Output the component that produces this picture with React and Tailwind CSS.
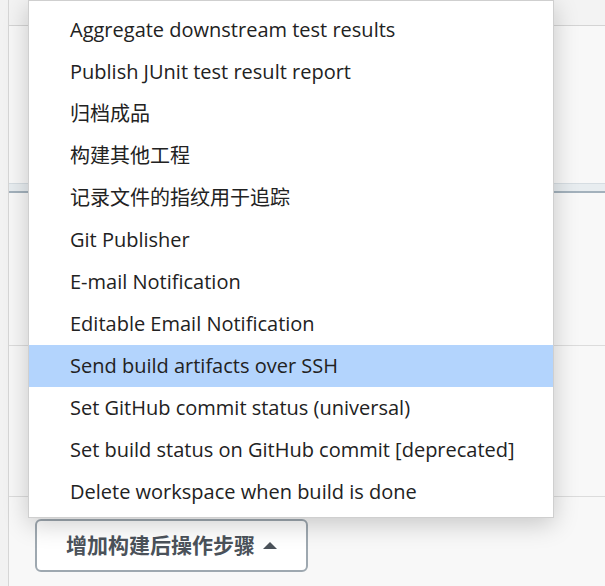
import React from 'react';

const items = [
  'Aggregate downstream test results',
  'Publish JUnit test result report',
  '归档成品',
  '构建其他工程',
  '记录文件的指纹用于追踪',
  'Git Publisher',
  'E-mail Notification',
  'Editable Email Notification',
  'Send build artifacts over SSH',
  'Set GitHub commit status (universal)',
  'Set build status on GitHub commit [deprecated]',
  'Delete workspace when build is done',
];

const font = { fontFamily: '"Open Sans", "Noto Sans CJK SC", sans-serif' };

export default function App() {
  return (
    <div className="relative w-[605px] h-[586px] overflow-hidden bg-[#f2f2f2] flex" style={font}>
      {/* page panel behind the menu */}
      <div className="w-[8px]" />
      <div className="flex-1 flex flex-col border-l border-[#d6d6d6] bg-[#f8f8f8]">
        <div className="h-[26px] bg-[#f3f3f3] border-b border-[#d4d4d4]" />
        <div className="h-[157px]" />
        <div className="h-[10px] bg-[#e8edf0] border-t border-[#d6dde2] border-b-2 border-b-[#a3b1bc]" />
        <div className="h-[153px] border-b border-[#dcdcdc]" />
        <div className="h-[151px] border-b border-[#dcdcdc]" />
        <div className="pl-[26px] pt-[22px]">
          <button className="flex items-center h-[53px] w-[273px] pl-[29px] rounded-[6px] border-2 border-[#9ea8b0] bg-white text-[#4b525a] font-bold text-[21px]">
            <span>增加构建后操作步骤</span>
            <svg width="14" height="8" viewBox="0 0 14 8" className="ml-[8px]">
              <path d="M7 0 L14 7 L0 7 Z" fill="#4b525a" />
            </svg>
          </button>
        </div>
      </div>

      {/* dropdown menu */}
      <div className="absolute left-[28px] top-0 w-[526px] h-[518px] bg-white border border-[#cfcfcf] shadow-[0_6px_24px_rgba(0,0,0,0.2)] pt-[8px]">
        {items.map((t, i) => (
          <div
            key={t}
            className={`h-[42px] flex items-center pl-[41px] text-[20px] text-[#222] ${i === 8 ? 'bg-[#b3d4fd]' : ''}`}
          >
            {t}
          </div>
        ))}
      </div>
    </div>
  );
}
